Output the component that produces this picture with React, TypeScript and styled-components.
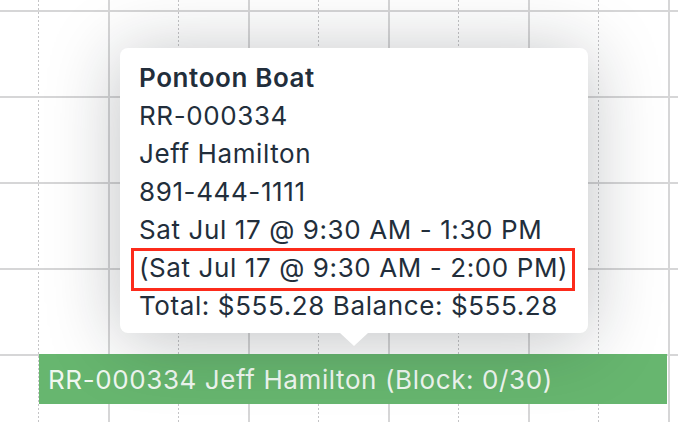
import React from "react";
import styled, { createGlobalStyle } from "styled-components";

const Global = createGlobalStyle`
  html, body { margin: 0; padding: 0; background: #ffffff; }
  body { width: 678px; height: 422px; overflow: hidden; }
  * { box-sizing: border-box; }
`;

const Calendar = styled.div`
  position: relative;
  width: 678px;
  height: 422px;
  overflow: hidden;
  font-family: Inter, "Liberation Sans", sans-serif;
  background-color: #ffffff;
  background-image:
    linear-gradient(to bottom, #d6d6d7 2px, transparent 2px),
    linear-gradient(to right, #d6d6d7 2px, transparent 2px),
    linear-gradient(to bottom, transparent 2px, #ffffff 2px),
    linear-gradient(to right, #c4c4c6 1.5px, transparent 1.5px);
  background-size: 100% 86px, 140px 100%, 100% 4px, 140px 100%;
  background-position: 0 10px, 108px 0, 0 0, 38px 0;
`;

const EventBar = styled.div`
  position: absolute;
  left: 39px;
  top: 354px;
  width: 628px;
  height: 50px;
  display: flex;
  align-items: center;
  padding-left: 9px;
  background: #67b66f;
  color: rgba(255, 255, 255, 0.92);
  font-size: 26px;
  letter-spacing: 0.6px;
  white-space: nowrap;
`;

const Tooltip = styled.div`
  position: absolute;
  left: 120px;
  top: 48px;
  width: 468px;
  height: 285px;
  padding: 11px 19px 0;
  background: #ffffff;
  border-radius: 8px;
  box-shadow: 0 6px 72px rgba(20, 25, 35, 0.27);
  color: #222e3b;
  font-size: 26px;
  letter-spacing: 0.6px;
  line-height: 38px;
  &::after {
    content: "";
    position: absolute;
    left: 220px;
    bottom: -13px;
    border-left: 14px solid transparent;
    border-right: 14px solid transparent;
    border-top: 13px solid #ffffff;
  }
`;

const Line = styled.div<{ $bold?: boolean }>`
  font-weight: ${(p) => (p.$bold ? 600 : 400)};
  white-space: nowrap;
`;

const Highlight = styled.span`
  position: relative;
  display: inline-block;
  &::after {
    content: "";
    position: absolute;
    left: -8px;
    right: -7px;
    top: -1px;
    bottom: -4px;
    border: 3px solid #fc2b1b;
  }
`;

export default function App() {
  return (
    <>
      <Global />
      <Calendar>
        <EventBar>RR-000334 Jeff Hamilton (Block: 0/30)</EventBar>
        <Tooltip>
          <Line $bold>Pontoon Boat</Line>
          <Line>RR-000334</Line>
          <Line>Jeff Hamilton</Line>
          <Line>891-444-1111</Line>
          <Line>Sat Jul 17 @ 9:30 AM - 1:30 PM</Line>
          <Line>
            <Highlight>(Sat Jul 17 @ 9:30 AM - 2:00 PM)</Highlight>
          </Line>
          <Line>Total: $555.28 Balance: $555.28</Line>
        </Tooltip>
      </Calendar>
    </>
  );
}
